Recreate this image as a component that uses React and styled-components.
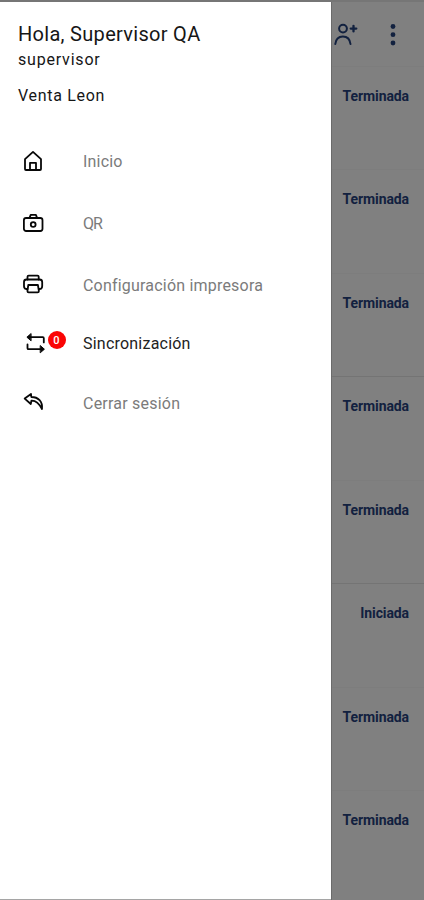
import React from "react";
import styled, { createGlobalStyle } from "styled-components";

const GlobalStyle = createGlobalStyle`
  * { box-sizing: border-box; }
  body { margin: 0; background: #808080; font-family: Roboto, "Noto Sans", sans-serif; }
`;

const Screen = styled.div`
  display: flex;
  width: 424px;
  height: 900px;
  overflow: hidden;
  border-top: 2px solid #767676;
`;

const Drawer = styled.aside`
  display: flex;
  flex-direction: column;
  width: 331px;
  flex: none;
  background: #fff;
  border-bottom: 1px solid #a5a5a5;
`;

const Profile = styled.header`
  display: flex;
  flex-direction: column;
  padding: 20px 18px 0;
  height: 129px;
  color: #161616;
  white-space: nowrap;
`;

const Greeting = styled.h1`
  margin: 0;
  font-size: 20px;
  line-height: 24px;
  font-weight: 400;
  letter-spacing: 0.3px;
`;

const Role = styled.span`
  font-size: 16px;
  line-height: 20px;
  margin-top: 4px;
  letter-spacing: 0.8px;
`;

const Company = styled.span`
  font-size: 16px;
  line-height: 20px;
  margin-top: 16px;
  letter-spacing: 0.7px;
`;

const Menu = styled.nav`
  display: flex;
  flex-direction: column;
`;

const MenuItem = styled.a`
  display: flex;
  align-items: center;
  height: ${(p) => p.$height}px;
  padding-left: 22px;
  color: ${(p) => (p.$active ? "#222" : "#7b7b7b")};
  font-size: 16px;
  line-height: 20px;
  white-space: nowrap;
  letter-spacing: ${(p) => p.$tracking}px;
`;

const IconSlot = styled.span`
  display: flex;
  align-items: center;
  width: 61px;
  flex: none;
  margin-bottom: 3px;
  color: #080808;
  letter-spacing: 0;
`;

const Badge = styled.span`
  display: flex;
  align-items: center;
  justify-content: center;
  width: 18px;
  height: 18px;
  margin: -5px 0 0 0.5px;
  border-radius: 50%;
  background: #fa0505;
  color: #fff;
  font-size: 11px;
  line-height: 1;
  font-weight: 500;
`;

const Content = styled.main`
  flex: 1;
  min-width: 0;
  background: #808080;
  border-left: 1px solid #6b6b6b;
  color: #12213f;
`;

const Toolbar = styled.div`
  display: flex;
  align-items: flex-start;
  height: 63.5px;
  padding: 20px 0 0 2px;
`;

const MoreIcon = styled.svg`
  margin-left: 27.5px;
`;

const Row = styled.div`
  display: flex;
  justify-content: flex-end;
  height: 103.5px;
  padding: 19px 15px 0 0;
  border-top: 1px solid ${(p) => (p.$strong ? "#747474" : "#7d7d7d")};
`;

const Status = styled.span`
  font-size: 14px;
  line-height: 20px;
  font-weight: 700;
  letter-spacing: -0.1px;
`;

const line = { fill: "none", stroke: "currentColor", strokeWidth: 1.8, strokeLinejoin: "round", strokeLinecap: "round" };

const HomeIcon = () => (
  <svg width="22" height="22" viewBox="0 0 22 22" {...line}>
    <path d="M3 9.2 11 1.9l8 7.3V19q0 1-1 1H4q-1 0-1-1Z" />
    <path d="M8 20v-7.2h6V20" />
  </svg>
);

const CameraIcon = () => (
  <svg width="22" height="22" viewBox="0 0 22 22" {...line}>
    <rect x="1.9" y="6" width="18.6" height="13" rx="2.2" />
    <path d="M7.5 5.8 8.7 2.800h5.200l1.200 3" />
    <circle cx="11.200" cy="12.500" r="2.400" />
  </svg>
);

const PrinterIcon = () => (
  <svg width="22" height="22" viewBox="0 0 22 22" {...line}>
    <path d="M5.5 6.5V3.8q0-1.2 1.2-1.2h8.800q1.200 0 1.200 1.200v2.700" />
    <path d="M5.400 16H4Q2 15.500 2 13V9q0-2.500 2.500-2.500h13Q20.200 6.500 20.200 9v4q0 2.500-2 3h-1.400" />
    <path d="M6.300 12h9.600l1 6q0 1.300-1.300 1.300H6.700q-1.300 0-1.300-1.300Z" />
  </svg>
);

const SyncIcon = () => (
  <svg width="25" height="22" viewBox="0 0 25 22" {...line}>
    <path d="M7 5.200h13.800q1 0 1 1v4.200" />
    <path d="m8.800 1.800-3.900 3.400 3.900 3.400Z" fill="currentColor" strokeWidth="1" />
    <path d="M5.500 12.400v3.800q0 1 1 1h14" />
    <path d="m18.500 13.800 3.900 3.400-3.900 3.400Z" fill="currentColor" strokeWidth="1" />
  </svg>
);

const ReplyIcon = () => (
  <svg width="22" height="22" viewBox="0 0 22 22" {...line}>
    <path d="M9 3 2.700 7.600 8.800 13l.6-3.400c4.300-.3 7.500 2.400 10.600 8.400.8-7.500-3.700-12-10.700-12Z" />
  </svg>
);

const PersonAddIcon = () => (
  <svg width="25" height="26" viewBox="0 0 25 26" {...line} strokeWidth="2">
    <circle cx="9" cy="6.600" r="3.900" />
    <path d="M1.300 22c.5-5 3.500-7.600 7.600-7.600s7 2.600 7.600 7.600" />
    <path d="M16.700 6.600h5.600M19.500 3.800v5.600" strokeWidth="2.300" />
  </svg>
);

const menu = [
  { label: "Inicio", icon: <HomeIcon />, height: 62, tracking: 0.2 },
  { label: "QR", icon: <CameraIcon />, height: 62, tracking: -0.9 },
  { label: "Configuración impresora", icon: <PrinterIcon />, height: 61, tracking: 0.2 },
  { label: "Sincronización", icon: <SyncIcon />, height: 56, tracking: 0.22, badge: "0" },
  { label: "Cerrar sesión", icon: <ReplyIcon />, height: 63, tracking: 0.22 },
];

const statuses = ["Terminada", "Terminada", "Terminada", "Terminada", "Terminada", "Iniciada", "Terminada", "Terminada"];

export default function App() {
  return (
    <>
      <GlobalStyle />
      <Screen>
        <Drawer>
          <Profile>
            <Greeting>Hola, Supervisor QA</Greeting>
            <Role>supervisor</Role>
            <Company>Venta Leon</Company>
          </Profile>
          <Menu>
            {menu.map((item) => (
              <MenuItem key={item.label} $height={item.height} $tracking={item.tracking} $active={Boolean(item.badge)}>
                <IconSlot>
                  {item.icon}
                  {item.badge && <Badge>{item.badge}</Badge>}
                </IconSlot>
                {item.label}
              </MenuItem>
            ))}
          </Menu>
        </Drawer>
        <Content>
          <Toolbar>
            <PersonAddIcon />
            <MoreIcon width="12" height="26" viewBox="0 0 12 26" fill="currentColor">
              <circle cx="6" cy="4.500" r="2.400" />
              <circle cx="6" cy="12.700" r="2.400" />
              <circle cx="6" cy="21" r="2.400" />
            </MoreIcon>
          </Toolbar>
          {statuses.map((status, i) => (
            <Row key={i} $strong={i === 3 || i === 5}>
              <Status>{status}</Status>
            </Row>
          ))}
        </Content>
      </Screen>
    </>
  );
}
